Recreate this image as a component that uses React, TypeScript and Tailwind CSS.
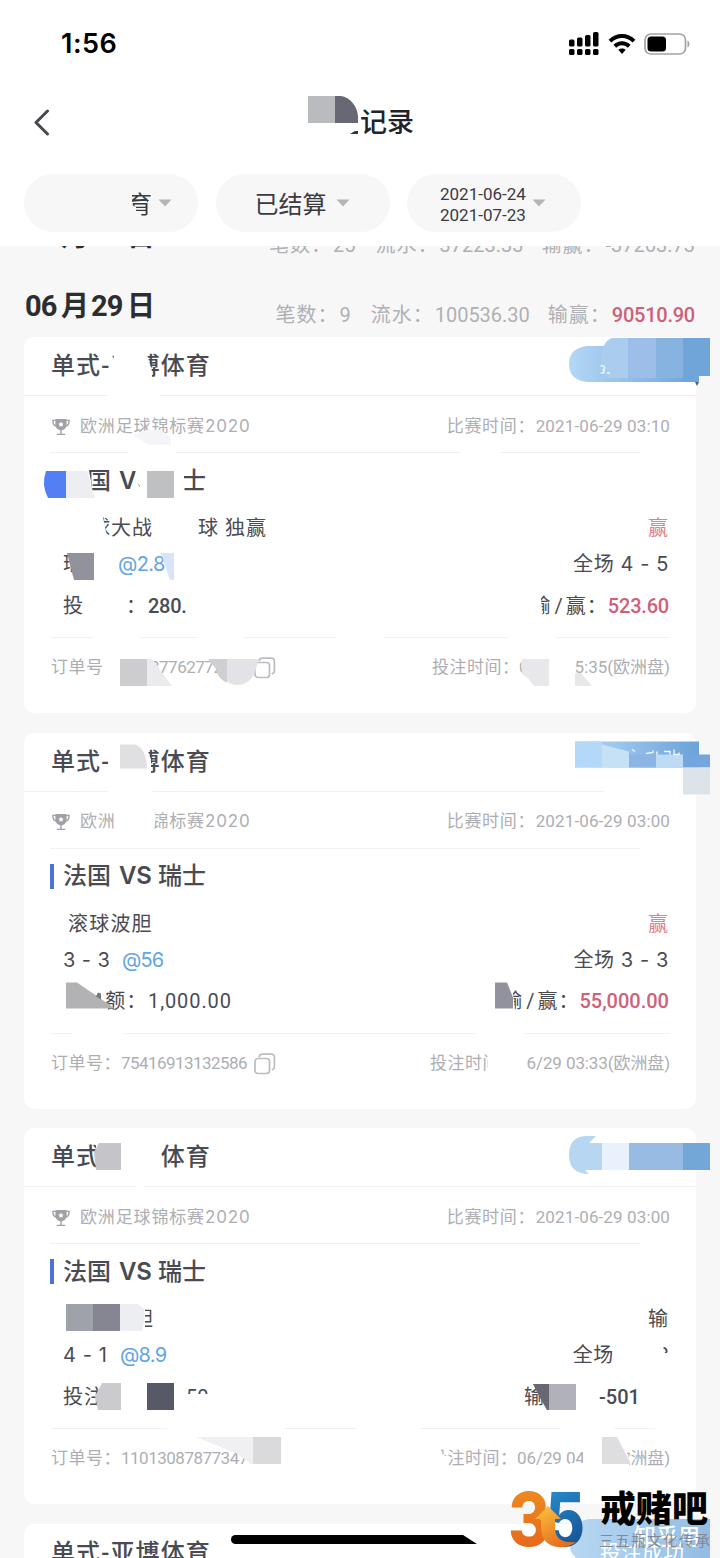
import type { ReactNode } from "react";

const NUM = "font-['Roboto','Noto_Sans_CJK_SC',sans-serif]";
const SF = "font-['Inter','Noto_Sans_CJK_SC',sans-serif]";

/* A run of text that takes a fixed share of its row. */
function Seg({ c = "", children }: { c?: string; children?: ReactNode }) {
  return <span className={`block shrink-0 whitespace-pre ${c}`}>{children}</span>;
}

function Trophy() {
  return (
    <svg className="h-[18px] w-[18px] shrink-0" viewBox="0 0 18 18" fill="none">
      <path d="M3.400 1h11.200v5.200c0 3.400-2.300 6-5.600 6S3.400 9.600 3.400 6.200z" fill="#a0a1a6" />
      <path d="M3.800 2.400H.9c0 3 1 5.200 3.600 5.700M14.200 2.400h2.900c0 3-1 5.200-3.600 5.700" stroke="#a0a1a6" strokeWidth="1.400" />
      <path d="M9 11.500v4.500M4.800 16.400h8.400" stroke="#a0a1a6" strokeWidth="1.400" />
      <path d="M9 3.800l.9 1.500 1.700.4-1.200 1.300.2 1.800L9 8.100l-1.600.7.2-1.800-1.200-1.300 1.700-.4z" fill="#fff" />
    </svg>
  );
}

function CopyIcon() {
  return (
    <svg className="h-[22px] w-[22px] shrink-0" viewBox="0 0 22 22" fill="none" stroke="#bcbdc1" strokeWidth="1.700">
      <rect x="1" y="5.500" width="14.500" height="15" rx="3" />
      <path d="M5 4C5.500 2 7 1.200 8.500 1.200H17c2 0 3.400 1.300 3.400 3.300v9c0 1.700-.9 2.900-2.600 3.400" />
    </svg>
  );
}

function Caret() {
  return (
    <svg className="h-[8px] w-[14px] shrink-0" viewBox="0 0 14 8">
      <path d="M.5.500h13L7 7.500z" fill="#b4b4b9" />
    </svg>
  );
}

function DayRow({ day, count, flow, net, red }: { day: string; count: string; flow: string; net: string; red?: boolean }) {
  return (
    <div className="flex h-[70px] justify-between pr-[25px] pl-[25px]">
      <div className={`flex h-[80px] items-center text-[29px] font-bold text-[#2d2d30] ${NUM}`}>
        <Seg c="w-[36px] tracking-[-1px]">{day.slice(0, 2)}</Seg>
        <Seg c="w-[30px] text-[28px]">月</Seg>
        <Seg c="w-[36px] tracking-[-1px]">{day.slice(2)}</Seg>
        <Seg c="text-[28px]">日</Seg>
      </div>
      <div className={`flex h-[95px] items-center text-[20px] text-[#afb0b4] ${NUM}`}>
        <Seg c="w-[64px] tracking-[1px]">笔数：</Seg>
        <Seg c="mr-[20px]">{count}</Seg>
        <Seg c="w-[64px] tracking-[1px]">流水：</Seg>
        <Seg c="mr-[18px]">{flow}</Seg>
        <Seg c="w-[64px] tracking-[1px]">输赢：</Seg>
        <Seg c={red ? "tracking-[-0.250px] font-medium text-[#cf5f78]" : ""}>{net}</Seg>
      </div>
    </div>
  );
}

type CardProps = {
  top: number;
  title: string;
  league: string;
  time: string;
  bar: boolean;
  bet: ReactNode;
  result: ReactNode;
  pick: ReactNode;
  score: ReactNode;
  stake: ReactNode;
  net: ReactNode;
  order: ReactNode;
  placed: ReactNode;
  children: ReactNode;
};

function Card(p: CardProps) {
  return (
    <section className="relative mb-[19.500px] h-[376px] w-[672px] shrink-0 rounded-[10px] bg-white text-[#4a4b52]">
      <div className={`flex h-[59px] items-center border-b border-[#f0f0f2] pl-[27px] text-[24px] font-medium tracking-[1.100px] ${NUM}`}>
        {p.title}
      </div>
      <div className="flex h-[57px] items-center border-b border-[#f1f1f3] pt-[5px] pr-[26px] pl-[28px] text-[17px] text-[#adaeb3] [border-image:linear-gradient(90deg,transparent_27px,#f1f1f3_27px,#f1f1f3_615px,transparent_615px)_1]">
        <Trophy />
        <Seg c={`ml-[10px] tracking-[0.850px] ${SF}`}>{p.league}</Seg>
        <Seg c={`ml-auto w-[89px] tracking-[0.700px] ${NUM}`}>比赛时间：</Seg>
        <Seg c={`tracking-[0.120px] ${NUM}`}>{p.time}</Seg>
      </div>
      <div className={`flex h-[55px] items-center pl-[26px] text-[24px] font-semibold ${SF}`}>
        <span className={p.bar ? "block h-[25px] w-[4px] bg-[#4a72d8]" : "block w-[4px]"} />
        <Seg c="ml-[9px] w-[56px] font-medium">法国</Seg>
        <Seg c="w-[39px] tracking-[-0.300px]">VS</Seg>
        <Seg c="font-medium">瑞士</Seg>
      </div>
      <div className={`flex h-[38px] items-center justify-between pt-[2px] pr-[28px] pl-[39px] text-[20px] ${NUM}`}>
        <div className="flex">{p.bet}</div>
        {p.result}
      </div>
      <div className={`flex h-[36px] items-center justify-between pr-[27px] pl-[39px] text-[20px] ${SF}`}>
        <div className="flex">{p.pick}</div>
        <div className="flex">{p.score}</div>
      </div>
      <div className={`mb-[9px] flex h-[46px] items-center justify-between pt-[1px] pr-[27px] pl-[39px] text-[20px] ${NUM}`}>
        <div className="flex">{p.stake}</div>
        <div className="flex">{p.net}</div>
      </div>
      <div className={`ml-[27px] flex h-[60px] w-[619px] items-center justify-between border-t border-[#f1f1f3] pt-[1px] text-[17px] text-[#adaeb3] ${NUM}`}>
        <div className="flex items-center">{p.order}</div>
        <div className="flex items-center">{p.placed}</div>
      </div>
      <svg
        className="pointer-events-none absolute top-0 -left-6 h-[376px] w-[720px] overflow-visible"
        viewBox={`0 ${p.top} 720 376`}
        fill="#fff"
      >
        {p.children}
      </svg>
    </section>
  );
}

function Pill({ children }: { children: ReactNode }) {
  return <div className="flex h-[58px] w-[174px] items-center rounded-full bg-[#f7f7f8]">{children}</div>;
}

function StatusBar() {
  return (
    <div className={`flex h-[87px] items-center pr-[29px] pl-[61px] ${SF}`}>
      <span className="pt-[2px] text-[27px] font-semibold tracking-[0.500px] text-black">1:56</span>
      <svg className="ml-auto h-[24px] w-[31px]" viewBox="0 0 31 24">
        {[7.5, 5.5, 3, 0].map((y, i) => (
          <g key={y}>
            <rect x={1 + i * 8} y={y} width="5.500" height={14.5 - y} rx="1.500" />
            <rect x={1 + i * 8} y="17" width="5.500" height="6" rx="1.500" />
          </g>
        ))}
      </svg>
      <svg className="ml-[9px] h-[22px] w-[28px]" viewBox="0 0 28 22" fill="none" stroke="#000" strokeWidth="4">
        <path d="M2 8.200C8.800 1.300 19.200 1.300 26 8.200" />
        <path d="M6.800 13.200c4.200-4 10.200-4 14.400 0" />
        <path d="M14 21l-3.700-4.200c2.200-1.900 5.200-1.900 7.400 0z" fill="#000" stroke="none" />
      </svg>
      <svg className="ml-[8px] h-[22px] w-[47px]" viewBox="0 0 47 22" fill="none">
        <rect x="1" y="1" width="40.500" height="20" rx="6" stroke="#a2a2a4" strokeWidth="1.700" />
        <rect x="3.500" y="3.500" width="18.500" height="15" rx="3.500" fill="#000" />
        <path d="M43.500 7.500c2.600 1 2.600 6 0 7z" fill="#a2a2a4" />
      </svg>
    </div>
  );
}

const fullLabel = "w-[85px] tracking-[1.100px]";
const smallLabel = "w-[87px] tracking-[0.500px]";

export default function App() {
  return (
    <main className="relative flex h-[1558px] w-[720px] flex-col overflow-hidden bg-[#f7f7f8]">
      <header className="relative z-10 h-[246px] shrink-0 bg-white">
        <StatusBar />
        <div className="relative flex h-[70px] items-center">
          <svg className="ml-[34px] h-[27px] w-[16px]" viewBox="0 0 16 27" fill="none" stroke="#47484e" strokeWidth="3">
            <path d="M13.500 2L2 13.500 13.500 25" strokeLinecap="round" strokeLinejoin="round" />
          </svg>
          <h1 className={`ml-[310px] pt-[3px] text-[27px] font-medium text-[#222329] ${NUM}`}>记录</h1>
          <svg className="absolute top-[8px] left-[306px] h-[42px] w-[56px]" viewBox="306 95 56 42">
            <rect x="308" y="96" width="27" height="27" fill="#b9bbbf" />
            <path d="M335 96h6c9 1 16 10 17 20v7h-23z" fill="#676873" />
            <path d="M350 134l5-3h3v3z" fill="#34353a" />
          </svg>
        </div>
        <div className={`mt-[17px] flex gap-[17.500px] pl-[24px] text-[#3b3b3f] ${NUM}`}>
          <Pill>
            <span className="relative ml-[104px] pt-[4px] text-[24px]">
              育
              <svg className="absolute top-0 left-0 h-full w-full" viewBox="0 0 24 40" fill="#f7f7f8">
                <path d="M0 0h4v22l4 2v16H0zM20 18h4v22h-3z" />
              </svg>
            </span>
            <span className="ml-[6px] flex"><Caret /></span>
          </Pill>
          <Pill>
            <span className="mr-[9px] ml-[39px] pt-[4px] text-[24px]">已结算</span>
            <Caret />
          </Pill>
          <Pill>
            <span className="mr-[6px] ml-[33px] pt-[4px] text-[17px] leading-[21px]">
              2021-06-24
              <br />
              2021-07-23
            </span>
            <Caret />
          </Pill>
        </div>
      </header>

      <div className="-mt-[49px] shrink-0">
        <DayRow day="0630" count="25" flow="37223.33" net="-37263.73" />
        <DayRow day="0629" count="9" flow="100536.30" net="90510.90" red />
      </div>

      <div className="ml-[24px] flex flex-col">
        <Card
          top={337}
          title="单式-亚博体育"
          league="欧洲足球锦标赛2020"
          time="2021-06-29 03:10"
          bar={false}
          bet={
            <>
              <Seg c="ml-[27px] w-[108px] tracking-[1px]">球大战</Seg>
              <Seg c="w-[27px]">球</Seg>
              <Seg c="tracking-[1px]">独赢</Seg>
            </>
          }
          result={<Seg c="text-[#e0808f]">赢</Seg>}
          pick={
            <>
              <Seg c="w-[55px]">瑞</Seg>
              <Seg c="tracking-[-0.600px] text-[#62a5e2]">@2.8</Seg>
            </>
          }
          score={<Seg c="tracking-[0.600px]">全场 4 - 5</Seg>}
          stake={
            <>
              <Seg c="w-[63px]">投</Seg>
              <Seg c="w-[22px]">：</Seg>
              <Seg c="tracking-[-0.300px] font-medium">280.</Seg>
            </>
          }
          net={
            <>
              <Seg c="mr-[4px]">输</Seg>
              <Seg c="mr-[3px]">/</Seg>
              <Seg c="w-[42px] tracking-[1px]">赢：</Seg>
              <Seg c="tracking-[-0.200px] font-medium text-[#d0607a]">523.60</Seg>
            </>
          }
          order={
            <>
              <Seg c="w-[99px] tracking-[0.500px]">订单号</Seg>
              <Seg c="w-[104px] tracking-[-0.500px]">37762772</Seg>
              <CopyIcon />
            </>
          }
          placed={
            <>
              <Seg c={smallLabel}>投注时间：</Seg>
              <Seg c="w-[46px]">0</Seg>
              <Seg>15:35(欧洲盘)</Seg>
            </>
          }
        >
          <path d="M110 359l2-8h34l6 20v15h-44v-16l2-2zM108 393h51v5h-51z" />
          <path d="M112 357l2-2v3z" fill="#777" />
          <path d="M129 448h47v7h-47zM461 448h40v7h-40z" />
          <path d="M133 435l14-5h14l10 8v7h-22z" fill="#f5f5f9" />
          <path d="M60 466h28l3 15v20H60zM136 468h48v32h-50v-8z" />
          <path d="M66 471h21l8 27H66z" fill="#ededf2" />
          <path d="M46 471h20v27H48q-7-13-2-27z" fill="#5280f4" />
          <path d="M137 483l3 3v1z" fill="#555" />
          <path d="M147 471h27v27h-27z" fill="#bfc0c2" />
          <path d="M88 512h14l3 15 3 14H88z" />
          <path d="M67 553h27v27H74z" fill="#91929c" />
          <path d="M161 553h13v27h-4z" fill="#d7e4fa" />
          <path d="M526 590h15v10l2 18h-17zM93 635h47v5H93zM198 635h47v5h-47zM337 635h47v5h-47zM508 635h48v5h-48z" />
          <path d="M147 655l6 6 5 10v18h-11z" />
          <path d="M147 659h5l20 27h-25z" fill="#ebebed" />
          <path d="M120 659h27v27h-27z" fill="#cdcdcf" />
          <path d="M208 659h19v24q-10-5-11-14z" fill="#cecfd2" />
          <path d="M227 659h31q-3 26-21 26-7 0-10-4z" fill="#e3e3e7" />
          <path d="M521 654h53v7l-1 5v20h-37l-14-12z" />
          <path d="M522 659h27v27h-15l-6-8-6-4z" fill="#e8e8eb" />
          <path d="M575 673h6l11 13h-17z" fill="#e8e8eb" />
          <defs>
            <linearGradient id="badge" x1="0" x2="1">
              <stop offset="0" stopColor="#b4d7f5" />
              <stop offset="1" stopColor="#6ba2d9" />
            </linearGradient>
          </defs>
          <path d="M587 346h112v36H587q-18-2-18-18t18-18z" fill="url(#badge)" />
          <path d="M612 338h16v40h-20q-8-6-7-16 0-20 11-24z" fill="#aacced" />
          <path d="M628 338h28v40h-28z" fill="#9dbee9" />
          <path d="M656 338h27v40h-27z" fill="#86b3df" />
          <path d="M683 338h27v38h-11v5h-16z" fill="#6fa5d8" />
          <path d="M695 382h4l-2 4z" fill="#4b6274" />
          <path d="M600.500 366q4-1 4 1.500t-2 2q3 1 1 3.500h-3M607 373h3" fill="none" stroke="#e6f7ff" strokeWidth="1.500" />
        </Card>

        <Card
          top={732.5}
          title="单式-亚博体育"
          league="欧洲足球锦标赛2020"
          time="2021-06-29 03:00"
          bar
          bet={<Seg c="ml-[5px] tracking-[1.200px]">滚球波胆</Seg>}
          result={<Seg c="text-[#e0808f]">赢</Seg>}
          pick={
            <>
              <Seg c="w-[59px] tracking-[0.400px]">3 - 3</Seg>
              <Seg c="tracking-[-0.800px] text-[#62a5e2]">@56</Seg>
            </>
          }
          score={<Seg c="tracking-[0.600px]">全场 3 - 3</Seg>}
          stake={
            <>
              <Seg c={fullLabel}>投注额：</Seg>
              <Seg c="tracking-[0.900px]">1,000.00</Seg>
            </>
          }
          net={
            <>
              <Seg c="mr-[4px]">输</Seg>
              <Seg c="mr-[3px]">/</Seg>
              <Seg c="w-[42px] tracking-[1px]">赢：</Seg>
              <Seg c="font-medium text-[#d0607a]">55,000.00</Seg>
            </>
          }
          order={
            <>
              <Seg c="w-[70px] tracking-[0.500px]">订单号：</Seg>
              <Seg c="w-[133px] tracking-[-0.550px]">75416913132586</Seg>
              <CopyIcon />
            </>
          }
          placed={
            <>
              <Seg c={smallLabel}>投注时间：</Seg>
              <Seg c="tracking-[-0.100px]">06/29 03:33(欧洲盘)</Seg>
            </>
          }
        >
          <path d="M108 745h38l5 14v16h-43zM108 788h44v7h-44zM604 788h92v7h-92z" />
          <path d="M120 744h15q11 3 12 24h-27z" fill="#e0e0e3" />
          <path d="M116 808h38l2 10-4 14h-36z" />
          <path d="M60 984h30l12 8 6 16v5H60z" />
          <path d="M66 982h11l38 26H66z" fill="#b2b2b5" />
          <path d="M98 992l3 1v6l-5-3z" fill="#777" />
          <path d="M72 1030h52v6H72zM475 1030h50v6h-50z" />
          <path d="M503 985h9l3 25h-12z" />
          <path d="M495 982h12l6 15v11h-18z" fill="#91929d" />
          <path d="M488 1048h38v28h-38z" />
          <path d="M575 741h124v26H575z" fill="url(#badge)" />
          <path d="M575 741h27v26h-27z" fill="#b4d8f7" />
          <path d="M602 744l27 7v16h-27z" fill="#c6e0f5" />
          <path d="M629 754h27v13h-27z" fill="#8cb5e5" />
          <path d="M656 754h27v13h-27z" fill="#bddbf5" />
          <path d="M683 754h27v13h-27z" fill="#74a5dc" />
          <path d="M683 767h27v27h-27z" fill="#dce4e9" />
          <path d="M632 749l3 2M646 753l7-1v-2M657 751v3M664 751h6v3M674 749v5h5v-2" fill="none" stroke="#eef8ff" strokeWidth="1.400" />
        </Card>

        <Card
          top={1128}
          title="单式-亚博体育"
          league="欧洲足球锦标赛2020"
          time="2021-06-29 03:00"
          bar
          bet={<Seg c="ml-[70px]">胆</Seg>}
          result={<Seg>输</Seg>}
          pick={
            <>
              <Seg c="w-[57px] tracking-[0.600px]">4 - 1</Seg>
              <Seg c="tracking-[-0.700px] text-[#62a5e2]">@8.9</Seg>
            </>
          }
          score={
            <>
              <Seg c="w-[84px] tracking-[0.600px]">全场</Seg>
              <Seg>3</Seg>
            </>
          }
          stake={
            <>
              <Seg c="w-[123px] tracking-[1px]">投注</Seg>
              <Seg>50</Seg>
            </>
          }
          net={
            <>
              <Seg c="w-[75px]">输</Seg>
              <Seg c="w-[70px] font-medium">-501</Seg>
            </>
          }
          order={
            <>
              <Seg c="w-[70px] tracking-[0.500px]">订单号：</Seg>
              <Seg c="tracking-[-0.500px]">110130878773475</Seg>
            </>
          }
          placed={
            <>
              <Seg c={smallLabel}>投注时间：</Seg>
              <Seg c="tracking-[-0.100px]">06/29 04:35(欧洲盘)</Seg>
            </>
          }
        >
          <path d="M96 1142h64v30H96z" />
          <path d="M99 1143h22v27H96l-2-18z" fill="#c5c5c9" />
          <path d="M136 1184h8v6h-8z" />
          <path d="M130 1305h15v28h-15z" />
          <path d="M66 1304h27v27H66z" fill="#a0a2a9" />
          <path d="M93 1304h27v27H93z" fill="#858691" />
          <path d="M120 1304h18l6 5v14l-2 8h-22z" fill="#edeef1" />
          <path d="M650 1340h13l1 14 8-1v18h-22z" />
          <path d="M666 1353l3 3v-10h3v24h-22v-17z" />
          <path d="M102 1383h19v27H98l-3-14z" fill="#cbcbce" />
          <path d="M147 1383h27v27h-27z" fill="#575968" />
          <path d="M184 1394h30v16h-30zM184 1383h14v4h-14z" />
          <path d="M167 1425h118v6H167zM357 1425h63v6h-63zM560 1425h54v6h-54zM655 1425h20v6h-20z" />
          <path d="M533 1384h16v26h-2l-8-14z" fill="#676874" />
          <path d="M549 1384h27v26h-27z" fill="#b0b1b9" />
          <path d="M196 1437h58v27h-3l-13-10z" fill="#f0f0f2" />
          <path d="M253 1437h28v27h-28z" fill="#dadadd" />
          <path d="M429 1444h12v9l6 4v15h-18zM583 1444h40l6 14v14h-46zM570 1463h14v8h-14z" />
          <path d="M602 1437h15l13 25v2h-28z" fill="#dedee0" />
          <path d="M587 1136h9l-7 7h13v27h-17l4 4q-20 0-20-19t18-19z" fill="#b7d6f1" />
          <path d="M602 1143h27v27h-27z" fill="#e9f1fc" />
          <path d="M629 1143h54v27h-54z" fill="#98bbe3" />
          <path d="M683 1143h27v27h-27z" fill="#72a7d7" />
        </Card>

        <section className="h-[60px] w-[672px] rounded-t-[10px] bg-white">
          <div className={`flex h-[59px] items-center pl-[27px] text-[24px] font-medium tracking-[1.100px] text-[#4a4b52] ${NUM}`}>
            单式-亚博体育
          </div>
        </section>
      </div>

      {/* home indicator */}
      <svg className="absolute top-[1535px] left-[231px] z-10 h-[9px] w-[246px]" viewBox="0 0 246 9">
        <path d="M4.500 0H232l14 9H4.500a4.500 4.500 0 010-9z" />
      </svg>

      {/* badge of the last card, under the watermark */}
      <div className="absolute top-[1519px] left-[569px] h-[45px] w-[141px] rounded-l-[22px] bg-linear-to-r from-[#b7d8f3] to-[#94bce4]">
        <span className="absolute top-[18px] left-[31px] text-[21px] leading-[28px] whitespace-nowrap text-white font-['Noto_Sans_CJK_SC',sans-serif]">投注成功</span>
        <span className="absolute top-[1px] left-[65px] text-[22px] leading-[28px] font-medium whitespace-nowrap text-white font-['Noto_Sans_CJK_SC',sans-serif]">知乎用</span>
      </div>

      {/* watermark */}
      <div className="absolute top-[1484px] left-[508px] z-10 h-[70px] w-[208px]">
        <svg className="absolute top-0 left-0 h-[70px] w-[80px]" viewBox="508 1484 80 70">
          <defs>
            <linearGradient id="three" x1="0" y1="0" x2="0" y2="1">
              <stop offset="0" stopColor="#f0931f" />
              <stop offset="1" stopColor="#e4601c" />
            </linearGradient>
            <linearGradient id="five" x1="0" y1="0" x2="0.300" y2="1">
              <stop offset="0" stopColor="#2b9ad8" />
              <stop offset="1" stopColor="#154f93" />
            </linearGradient>
            <linearGradient id="arrow" x1="0" y1="0" x2="0.500" y2="1">
              <stop offset="0" stopColor="#fbc540" />
              <stop offset="1" stopColor="#e8701c" />
            </linearGradient>
          </defs>
          <text x="545" y="1546" fontSize="74" fontWeight="800" fontFamily="Inter" textLength="40" lengthAdjust="spacingAndGlyphs" fill="url(#five)">5</text>
          <text x="508" y="1546" fontSize="74" fontWeight="800" fontFamily="Inter" textLength="42" lengthAdjust="spacingAndGlyphs" fill="url(#three)">3</text>
          <path d="M548 1506l13 13h-6v10q1 15 21 13-8 6-18 5-17-2-17-20v-8h-6z" fill="url(#arrow)" />
        </svg>
        <span className="absolute top-[-1px] left-[92px] text-[36px] leading-[46px] font-black whitespace-nowrap text-black font-['Noto_Sans_CJK_SC',sans-serif]">戒赌吧</span>
        <span className="absolute top-[45px] left-[91px] text-[15px] leading-[22px] tracking-[1px] whitespace-nowrap text-[#85898f] font-['Noto_Sans_CJK_SC',sans-serif]">三五瓶文化传承</span>
      </div>
    </main>
  );
}
